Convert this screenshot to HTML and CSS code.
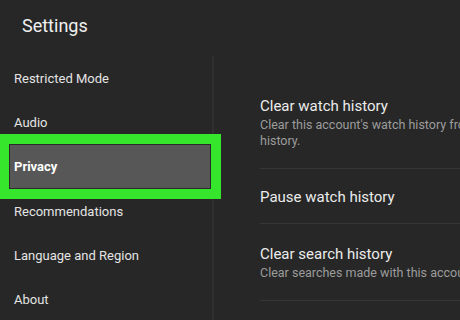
FILE: index.html
```html
<!DOCTYPE html>
<html lang="en">
<head>
    <meta charset="UTF-8">
    <title>Settings</title>
    <link rel="stylesheet" href="styles.css">
</head>
<body class="page">
<div class="header">Settings</div>
<div class="layout">
    <div class="sidebar">
        <div class="nav-item">Restricted Mode</div>
        <div class="nav-item">Audio</div>
        <div class="nav-item active">Privacy</div>
        <div class="nav-item">Recommendations</div>
        <div class="nav-item">Language and Region</div>
        <div class="nav-item">About</div>
    </div>
    <div class="content">
        <div class="row">
            <div class="row-title">Clear watch history</div>
            <div class="row-desc">Clear this account's watch history from all devices and start a new watch<br>history.</div>
        </div>
        <div class="row single">
            <div class="row-title">Pause watch history</div>
        </div>
        <div class="row">
            <div class="row-title">Clear search history</div>
            <div class="row-desc">Clear searches made with this account on all devices.</div>
        </div>
    </div>
</div>
</body>
</html>
```

FILE: styles.css
```css
html, body {
    margin: 0;
    padding: 0;
}

.page {
    width: 460px;
    height: 320px;
    overflow: hidden;
    background: #272727;
    color: #e6e6e6;
    font-family: Roboto, "Liberation Sans", sans-serif;
}

.header {
    height: 56px;
    padding-left: 22px;
    font-size: 18px;
    line-height: 52px;
    color: #f0f0f0;
}

.layout {
    display: grid;
    grid-template-columns: 214px 1fr;
}

.sidebar {
    border-right: 2px solid #303030;
    height: 264px;
}

.nav-item {
    height: 44.2px;
    line-height: 46px;
    padding-left: 14px;
    font-size: 13px;
    color: #e4e4e4;
    white-space: nowrap;
}

.nav-item.active {
    position: relative;
    margin: 0 1px 0 9px;
    padding-left: 5px;
    background: #575757;
    font-weight: bold;
    color: #fff;
    outline: 10px solid #36e62c;
    box-shadow: inset 0 0 0 1px #2a2a2a;
}

.content {
    padding: 20px 0 0 46px;
    white-space: nowrap;
    overflow: hidden;
}

.row {
    padding: 21px 0 19px 0;
    border-bottom: 1px solid #363636;
}

.row.single {
    padding: 19px 0 17px 0;
}

.row-title {
    font-size: 15px;
    line-height: 18px;
    color: #ececec;
}

.row-desc {
    margin-top: 2px;
    font-size: 12.5px;
    line-height: 16px;
    color: #9c9c9c;
}
```
